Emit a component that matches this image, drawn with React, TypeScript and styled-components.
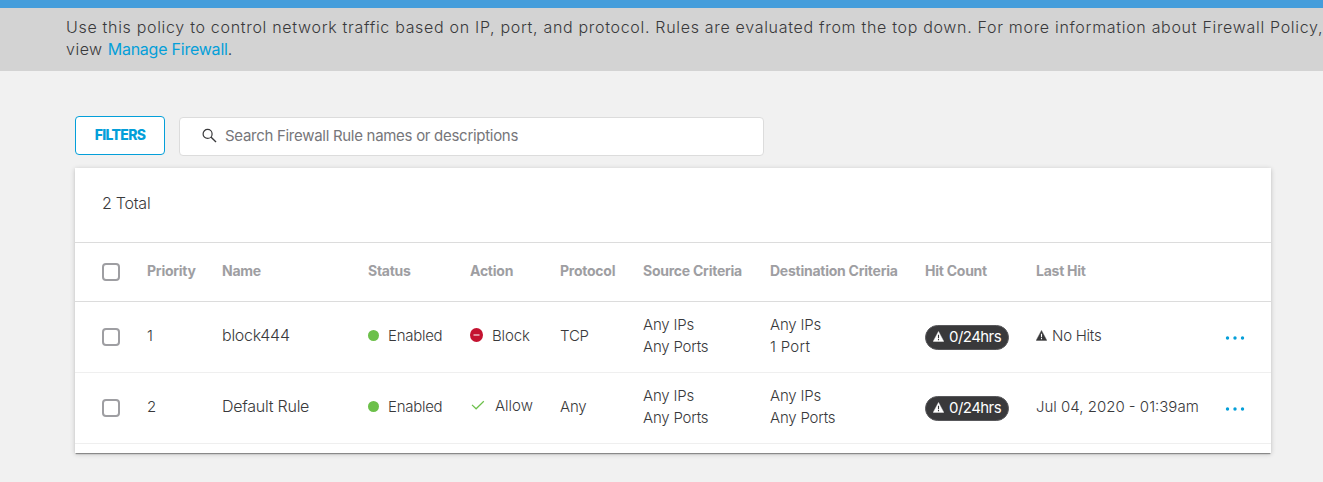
import React from "react";
import styled, { createGlobalStyle } from "styled-components";

const GlobalStyle = createGlobalStyle`
  * { box-sizing: border-box; }
  body {
    margin: 0;
    background: #f1f1f1;
    color: #39393b;
    font-family: Inter, "Liberation Sans", sans-serif;
    font-size: 15px;
    font-weight: 300;
    line-height: 22px;
    overflow: hidden;
  }
`;

const Page = styled.div`
  height: 482px;
  overflow: hidden;
`;

const TopBar = styled.div`
  height: 8px;
  background: #449ddb;
`;

const Banner = styled.div`
  height: 63px;
  padding: 8px 0 0 66px;
  background: #d3d3d3;
  font-size: 16px;
  font-weight: 350;
`;

const BannerLine = styled.div<{ $track: number }>`
  white-space: nowrap;
  letter-spacing: ${(p) => p.$track}px;
`;

const Link = styled.a`
  color: #049fd9;
  font-weight: 400;
  letter-spacing: -0.23px;
  text-decoration: none;
`;

const Content = styled.main`
  padding: 45px 52px 0 75px;
`;

const Toolbar = styled.div`
  display: flex;
  align-items: flex-start;
  gap: 14px;
  height: 52px;
`;

const FilterButton = styled.button`
  width: 90px;
  height: 39px;
  padding: 0 0 2px;
  border: 1px solid #049fd9;
  border-radius: 4px;
  background: #fff;
  color: #049fd9;
  font: 800 14px/35px Inter, "Liberation Sans", sans-serif;
  letter-spacing: -0.7px;
`;

const SearchBox = styled.div`
  display: flex;
  align-items: center;
  gap: 8px;
  width: 585px;
  height: 39px;
  margin-top: 1px;
  padding: 0 22px 2px;
  border: 1px solid #dcdcdc;
  border-radius: 4px;
  background: #fff;
  color: #76767a;
  font-weight: 400;
`;

const Card = styled.section`
  height: 285px;
  background: #fff;
  box-shadow: 0 2px 1px -1px rgba(0, 0, 0, 0.3), 0 1px 1px rgba(0, 0, 0, 0.08), 0 1px 5px rgba(0, 0, 0, 0.2);
`;

const Total = styled.div`
  height: 75px;
  padding: 24px 27px 0;
  border-bottom: 1px solid #dcdcdc;
`;

const Row = styled.div<{ $head?: boolean }>`
  display: grid;
  grid-template-columns: 45px 75px 146px 102px 90px 83px 127px 155px 111px 189px 1fr;
  align-items: center;
  height: ${(p) => (p.$head ? 59 : 71)}px;
  padding-left: 27px;
  border-bottom: 1px solid ${(p) => (p.$head ? "#dcdcdc" : "#efefef")};
  color: ${(p) => (p.$head ? "#9e9ea2" : "inherit")};
`;

const Text = styled.span<{ $track?: number }>`
  white-space: nowrap;
  letter-spacing: ${(p) => p.$track ?? 0}px;
`;

const LightText = styled(Text)`
  font-size: 16px;
  font-weight: 280;
`;

const HeadText = styled(Text)`
  font-size: 14px;
  font-weight: 700;
  padding-bottom: 2px;
`;

const Cell = styled.div<{ $gap?: number; $lift?: number }>`
  display: flex;
  align-items: center;
  gap: ${(p) => p.$gap ?? 0}px;
  padding-bottom: ${(p) => p.$lift ?? 3}px;
`;

const MenuCell = styled.div`
  display: flex;
  padding-top: 1px;
`;

const Stack = styled.div`
  display: flex;
  flex-direction: column;
  padding-bottom: 3px;
`;

const Checkbox = styled.span`
  width: 18px;
  height: 18px;
  border: 2px solid #9e9ea2;
  border-radius: 4px;
  background: #fff;
`;

const Dot = styled.span`
  width: 11px;
  height: 11px;
  border-radius: 50%;
  background: #6cc04a;
`;

const Pill = styled.span`
  display: flex;
  align-items: center;
  gap: 5px;
  width: 84px;
  height: 25px;
  padding: 0 0 1px 7px;
  border: 1px solid #58585b;
  border-radius: 13px;
  background: #39393b;
  color: #fff;
  font-weight: 400;
`;

const SearchIcon = () => (
  <svg width="15" height="15" viewBox="0 0 15 15" fill="none" stroke="#39393b">
    <circle cx="5.6" cy="5.9" r="4.5" strokeWidth="1.2" />
    <path d="M8.9 9.1L14 13.9" strokeWidth="1.4" />
  </svg>
);

const BlockIconSvg = styled.svg`
  margin-bottom: 1px;
`;

const BlockIcon = () => (
  <BlockIconSvg width="13" height="14" viewBox="0 0 13 14">
    <ellipse cx="6.5" cy="7" rx="6.5" ry="7" fill="#c41230" />
    <rect x="3.5" y="6" width="6" height="2" fill="#e08c9b" />
  </BlockIconSvg>
);

const CheckIcon = () => (
  <svg width="16" height="12" viewBox="0 0 16 12" fill="none" stroke="#6cc04a" strokeWidth="1.2">
    <path d="M2 4.9L6.1 8.8L13.8 1.2" />
  </svg>
);

const WarnIcon = ({ mark }: { mark: string }) => (
  <svg width="11" height="11" viewBox="0 0 11 11">
    <path d="M5.5 0.4L10.8 10.4H0.2Z" fill="currentColor" stroke="currentColor" strokeWidth="0.4" strokeLinejoin="round" />
    <path d="M5.5 3.8V7.2M5.5 8.1V9.3" stroke={mark} strokeWidth="1.1" />
  </svg>
);

const MoreIcon = () => (
  <svg width="20" height="4" viewBox="0 0 20 4" fill="#049fd9">
    <circle cx="2.5" cy="2" r="1.7" />
    <circle cx="10" cy="2" r="1.7" />
    <circle cx="17.5" cy="2" r="1.7" />
  </svg>
);

const headings = [
  "Priority",
  "Name",
  "Status",
  "Action",
  "Protocol",
  "Source Criteria",
  "Destination Criteria",
  "Hit Count",
  "Last Hit",
];

interface Rule {
  priority: string;
  name: string;
  blocked: boolean;
  protocol: string;
  destination: string;
  lastHit: string | null;
}

const rules: Rule[] = [
  { priority: "1", name: "block444", blocked: true, protocol: "TCP", destination: "1 Port", lastHit: null },
  { priority: "2", name: "Default Rule", blocked: false, protocol: "Any", destination: "Any Ports", lastHit: "Jul 04, 2020 - 01:39am" },
];

const RuleRow = ({ rule }: { rule: Rule }) => (
  <Row>
    <Checkbox />
    <Cell><Text>{rule.priority}</Text></Cell>
    <Cell $lift={4}><LightText $track={-0.25}>{rule.name}</LightText></Cell>
    <Cell $gap={9}><Dot /><Text $track={-0.27}>Enabled</Text></Cell>
    {rule.blocked ? (
      <Cell $gap={9}><BlockIcon /><Text $track={-0.15}>Block</Text></Cell>
    ) : (
      <Cell $gap={9} $lift={5}><CheckIcon /><Text>Allow</Text></Cell>
    )}
    <Cell><Text $track={-0.2}>{rule.protocol}</Text></Cell>
    <Stack><Text $track={-0.2}>Any IPs</Text><Text $track={-0.2}>Any Ports</Text></Stack>
    <Stack>
      <Text $track={-0.2}>Any IPs</Text>
      <Text $track={rule.destination === "1 Port" ? 0.3 : -0.2}>{rule.destination}</Text>
    </Stack>
    <Pill><WarnIcon mark="#39393b" /><Text $track={-0.55}>0/24hrs</Text></Pill>
    <Cell $gap={5}>
      {rule.lastHit ? <Text>{rule.lastHit}</Text> : <><WarnIcon mark="#fff" /><Text $track={-0.25}>No Hits</Text></>}
    </Cell>
    <MenuCell><MoreIcon /></MenuCell>
  </Row>
);

export default function App() {
  return (
    <Page>
      <GlobalStyle />
      <TopBar />
      <Banner>
        <BannerLine $track={0.69}>
          Use this policy to control network traffic based on IP, port, and protocol. Rules are evaluated from the top down. For more information about Firewall Policy,
        </BannerLine>
        <BannerLine $track={0.5}>view <Link>Manage Firewall</Link>.</BannerLine>
      </Banner>
      <Content>
        <Toolbar>
          <FilterButton>FILTERS</FilterButton>
          <SearchBox>
            <SearchIcon />
            <Text $track={-0.29}>Search Firewall Rule names or descriptions</Text>
          </SearchBox>
        </Toolbar>
        <Card>
          <Total><LightText $track={-0.25}>2 Total</LightText></Total>
          <Row $head>
            <Checkbox />
            {headings.map((label) => <HeadText key={label} $track={-0.25}>{label}</HeadText>)}
          </Row>
          {rules.map((rule) => <RuleRow key={rule.priority} rule={rule} />)}
        </Card>
      </Content>
    </Page>
  );
}
